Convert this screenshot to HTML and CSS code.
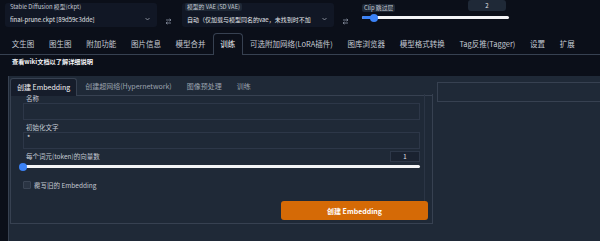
FILE: index.html
```html
<!DOCTYPE html>
<html lang="zh">
<head>
    <meta charset="UTF-8">
    <meta name="viewport" content="width=device-width, initial-scale=1.0">
    <title>Stable Diffusion</title>
    <link rel="stylesheet" href="styles.css">
</head>
<body>
    <div class="topbar">
        <div class="pick pick-ckpt">
            <span class="pick-label">Stable Diffusion 模型(ckpt)</span>
            <div class="pick-value">
                <span class="pick-text">final-prune.ckpt [89d59c3dde]</span>
                <svg class="chevron" width="5" height="4" viewBox="0 0 5 4"><path d="M0.5 1 L2.5 3 L4.5 1" fill="none" stroke="#9ca3af" stroke-width="0.8"/></svg>
            </div>
        </div>
        <button class="refresh">
            <svg width="7" height="7" viewBox="0 0 7 7"><path d="M1 2 H6 M4.5 0.8 L6 2 L4.5 3.2 M6 5 H1 M2.5 3.8 L1 5 L2.5 6.2" fill="none" stroke="#8b93a3" stroke-width="0.8"/></svg>
        </button>
        <div class="pick pick-vae">
            <span class="pick-label boxed">模型的 VAE (SD VAE)</span>
            <div class="pick-value">
                <span class="pick-text">自动（仅加载与模型同名的vae，未找到时不加</span>
                <svg class="chevron" width="5" height="4" viewBox="0 0 5 4"><path d="M0.5 1 L2.5 3 L4.5 1" fill="none" stroke="#9ca3af" stroke-width="0.8"/></svg>
            </div>
        </div>
        <button class="refresh">
            <svg width="7" height="7" viewBox="0 0 7 7"><path d="M1 2 H6 M4.5 0.8 L6 2 L4.5 3.2 M6 5 H1 M2.5 3.8 L1 5 L2.5 6.2" fill="none" stroke="#8b93a3" stroke-width="0.8"/></svg>
        </button>
        <div class="clip">
            <div class="clip-head">
                <span class="pick-label boxed">Clip 跳过层</span>
                <span class="clip-num">2</span>
            </div>
            <div class="slider small">
                <div class="slider-fill" style="width: 8%"></div>
                <div class="slider-thumb" style="left: 8%"></div>
            </div>
        </div>
    </div>

    <div class="tabs">
        <span class="tab">文生图</span>
        <span class="tab">图生图</span>
        <span class="tab">附加功能</span>
        <span class="tab">图片信息</span>
        <span class="tab">模型合并</span>
        <span class="tab selected">训练</span>
        <span class="tab">可选附加网络(LoRA插件)</span>
        <span class="tab">图库浏览器</span>
        <span class="tab">模型格式转换</span>
        <span class="tab">Tag反推(Tagger)</span>
        <span class="tab">设置</span>
        <span class="tab">扩展</span>
    </div>

    <p class="wiki">查看wiki文档以了解详细说明</p>

    <div class="panel">
        <div class="left-col">
            <div class="sub-tabs">
                <span class="sub-tab selected">创建 Embedding</span>
                <span class="sub-tab">创建超网络(Hypernetwork)</span>
                <span class="sub-tab">图像预处理</span>
                <span class="sub-tab">训练</span>
            </div>
            <div class="sub-content">
                <div class="form">
                    <label class="field-label">名称</label>
                    <div class="text-input"></div>
                    <label class="field-label">初始化文字</label>
                    <div class="text-input second">*</div>
                    <div class="num-row">
                        <label class="field-label">每个词元(token)的向量数</label>
                        <span class="num-box">1</span>
                    </div>
                    <div class="slider wide">
                        <div class="slider-fill" style="width: 0%"></div>
                        <div class="slider-thumb" style="left: 0%"></div>
                    </div>
                    <div class="check-row">
                        <span class="checkbox"></span>
                        <span class="check-label">覆写旧的 Embedding</span>
                    </div>
                </div>
                <div class="button-row">
                    <button class="primary">创建 Embedding</button>
                </div>
            </div>
        </div>
        <div class="right-col">
            <div class="output-box"></div>
        </div>
    </div>
</body>
</html>
```

FILE: styles.css
```css
:root {
    --page: #0b0f19;
    --block: #1f2937;
    --block-dark: #161d2b;
    --border: #374151;
    --text: #e5e7eb;
    --muted: #c5cad3;
    --dim: #9ca3af;
    --blue: #3b82f6;
    --orange: #d56a06;
}

body {
    margin: 0;
    width: 600px;
    height: 241px;
    overflow: hidden;
    background: var(--page);
    color: var(--text);
    font-family: "Noto Sans CJK SC", "Noto Sans", sans-serif;
}

/* top row: model pickers */
.topbar {
    display: flex;
    align-items: flex-start;
    height: 30px;
    padding: 3px 0 0 5px;
    box-sizing: border-box;
}

.pick {
    display: flex;
    flex-direction: column;
    height: 24px;
    padding: 0 4px 0 5px;
    box-sizing: border-box;
    background: #111725;
    border-radius: 3px;
}

.pick-ckpt {
    width: 152px;
}

.pick-vae {
    width: 152px;
    margin-left: 3px;
}

.pick-label {
    font-size: 5.8px;
    line-height: 8px;
    color: var(--muted);
    white-space: nowrap;
}

.pick-label.boxed {
    align-self: flex-start;
    background: var(--block);
    padding: 0 2px;
    margin-left: -2px;
    border-radius: 2px;
}

.pick-value {
    display: flex;
    align-items: center;
    justify-content: space-between;
    height: 12px;
    margin-top: 2px;
}

.pick-text {
    font-size: 6px;
    white-space: nowrap;
    overflow: hidden;
    color: var(--text);
}

.chevron {
    flex: none;
    margin-right: 3px;
}

.refresh {
    width: 22px;
    height: 24px;
    margin: 0;
    padding: 10px 0 0;
    border: none;
    background: none;
}

.clip {
    width: 156px;
    margin-left: 2px;
    margin-top: -3px;
}

.clip-head {
    display: flex;
    justify-content: space-between;
    align-items: flex-start;
    height: 12px;
    padding-left: 6px;
}

.clip-head .pick-label {
    margin-top: 4px;
}

.clip-num {
    width: 38px;
    height: 11px;
    margin-right: 8px;
    background: var(--block);
    border-radius: 3px;
    font-size: 6px;
    line-height: 11px;
    text-align: center;
    color: var(--text);
}

.slider {
    position: relative;
    height: 3px;
    background: #f3f4f6;
    border-radius: 2px;
}

.slider.small {
    margin: 4px 5px 0 4px;
}

.slider-fill {
    height: 100%;
    background: var(--blue);
    border-radius: 2px;
}

.slider-thumb {
    position: absolute;
    top: -2.5px;
    width: 8px;
    height: 8px;
    margin-left: -4px;
    background: var(--blue);
    border-radius: 50%;
}

/* main tabs */
.tabs {
    display: flex;
    height: 22px;
    margin-top: 3px;
    padding-left: 4.5px;
    border-bottom: 1px solid var(--border);
    box-sizing: border-box;
}

.tab {
    padding: 0 7.35px;
    font-size: 7.5px;
    line-height: 21px;
    color: var(--muted);
    white-space: nowrap;
}

.tab.selected {
    padding: 0 6.35px;
    color: #f3f4f6;
    border: 1px solid var(--border);
    border-bottom: none;
    border-radius: 4px 4px 0 0;
    background: var(--page);
    height: 22px;
    line-height: 20px;
    box-sizing: border-box;
    margin-bottom: -1px;
}

.wiki {
    margin: 0;
    padding: 2px 0 0 12px;
    height: 19px;
    font-size: 6.2px;
    line-height: 9px;
    font-weight: bold;
    color: #f3f4f6;
}

/* training panel */
.panel {
    display: flex;
    gap: 4px;
    height: 167px;
    margin-left: 8px;
    padding: 2px 0 0 1px;
    box-sizing: border-box;
    background: var(--block);
    border-left: 1px solid var(--border);
}

.left-col {
    width: 423px;
}

.sub-tabs {
    display: flex;
    height: 18px;
    border-bottom: 1px solid var(--border);
    box-sizing: border-box;
}

.sub-tab {
    padding: 0 7px;
    margin-right: 1px;
    font-size: 7px;
    line-height: 17px;
    color: var(--dim);
    white-space: nowrap;
}

.sub-tab.selected {
    padding: 0 6px;
    color: #f3f4f6;
    background: var(--block-dark);
    border: 1px solid var(--border);
    border-bottom: none;
    border-radius: 3px 3px 0 0;
    height: 18px;
    box-sizing: border-box;
    line-height: 16px;
}

.sub-content {
    height: 130px;
    border: 1px solid var(--border);
    border-top: none;
    box-sizing: border-box;
}

.form {
    margin: -2px 7px 0 8px;
    padding: 0 4px;
    border-right: 1px solid #2b3545;
}

.field-label {
    display: block;
    padding-left: 3px;
    font-size: 6.5px;
    line-height: 9px;
    color: var(--muted);
}

.text-input {
    height: 17px;
    margin: 0 0 3px;
    padding: 0 3px;
    border: 1px solid #2d3748;
    font-size: 7px;
    line-height: 9px;
    color: var(--text);
    box-sizing: border-box;
}

.text-input.second {
    margin-bottom: 1px;
}

.text-input + .field-label {
    margin-top: 1px;
}

.num-row {
    display: flex;
    justify-content: space-between;
    align-items: center;
    height: 12px;
}

.num-box {
    width: 30px;
    height: 11px;
    background: #1a2230;
    border: 1px solid #2d3748;
    box-sizing: border-box;
    font-size: 6px;
    line-height: 9px;
    text-align: center;
    color: var(--text);
}

.slider.wide {
    margin: 3px 0 0;
}

.check-row {
    display: flex;
    align-items: center;
    gap: 3px;
    height: 12px;
    margin-top: 11px;
    padding-bottom: 10px;
}

.checkbox {
    width: 6px;
    height: 6px;
    background: #2a3443;
    border: 1px solid #3b4555;
    border-radius: 1px;
}

.check-label {
    font-size: 6.5px;
    color: var(--muted);
}

.button-row {
    display: flex;
    justify-content: flex-end;
    padding: 0 4px 0 0;
}

.primary {
    width: 147px;
    height: 19px;
    border: none;
    border-radius: 3px;
    background: var(--orange);
    color: #fff;
    font-family: inherit;
    font-size: 7px;
    font-weight: bold;
}

.right-col {
    flex: 1;
    padding-top: 4px;
}

.output-box {
    height: 20px;
    border: 1px solid var(--border);
    border-right: none;
    box-sizing: border-box;
}
```
